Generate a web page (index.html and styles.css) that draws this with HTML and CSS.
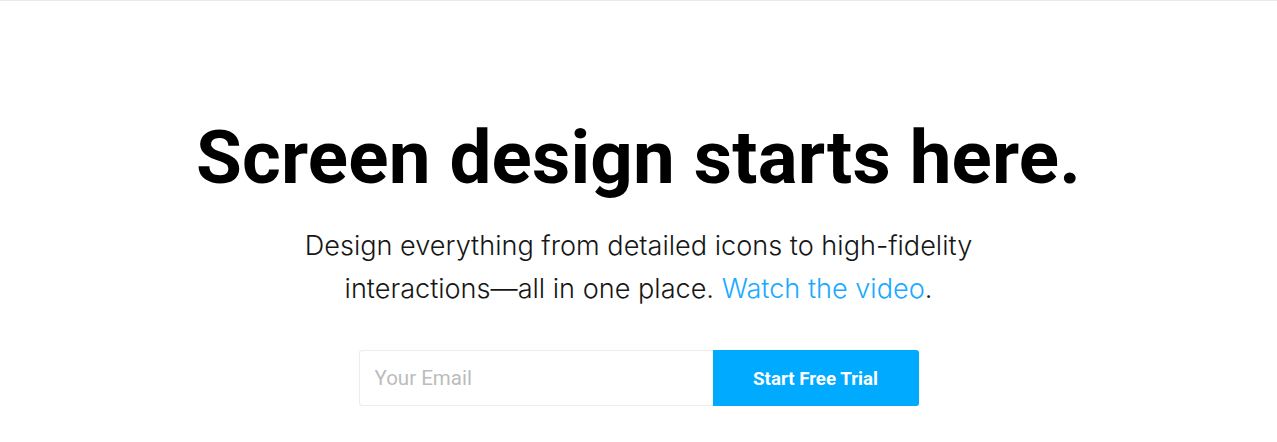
FILE: index.html
```html
<!DOCTYPE html>
<html>
<head>
<meta charset="utf-8">
<link rel="stylesheet" href="styles.css">
</head>
<body>
<div class="topline"></div>
<main class="hero">
  <h1 class="title">Screen design starts here.</h1>
  <p class="lead">Design everything from detailed icons to high-fidelity<br>interactions—all in one place. <a class="link" href="#">Watch the video</a>.</p>
  <form class="signup">
    <input class="email" type="email" placeholder="Your Email">
    <button class="cta" type="button">Start Free Trial</button>
  </form>
</main>
</body>
</html>
```
FILE: styles.css
```css
html, body {
  margin: 0;
  padding: 0;
  background: #fff;
}
body {
  font-family: Roboto, "Liberation Sans", sans-serif;
  color: #111;
}
.topline {
  height: 1px;
  background: #ebebeb;
}
.hero {
  display: flex;
  flex-direction: column;
  align-items: center;
  padding-top: 112px;
}
.title {
  margin: 0;
  font-size: 74.5px;
  font-weight: 700;
  line-height: 90px;
  letter-spacing: 0.2px;
  color: #000;
}
.lead {
  margin: 21px 0 0;
  font-family: Inter, Roboto, sans-serif;
  font-size: 27.1px;
  font-weight: 300;
  line-height: 43px;
  text-align: center;
  color: #161616;
}
.link {
  color: #1aaaff;
  text-decoration: none;
}
.signup {
  display: flex;
  margin-top: 40px;
}
.email {
  box-sizing: border-box;
  width: 354px;
  height: 56px;
  border: 1px solid #ececec;
  border-right: none;
  border-radius: 3px 0 0 3px;
  padding: 0 15px;
  font-family: Roboto, "Liberation Sans", sans-serif;
  font-size: 20.5px;
  color: #333;
  outline: none;
}
.email::placeholder {
  color: #bcbcbc;
}
.cta {
  width: 206px;
  height: 56px;
  padding-top: 2px;
  border: none;
  border-radius: 0 3px 3px 0;
  background: #00aaff;
  color: #fff;
  font-family: Roboto, "Liberation Sans", sans-serif;
  font-size: 18.7px;
  font-weight: 700;
  box-shadow: 0 1px 2px rgba(0,0,0,0.12);
  cursor: pointer;
}
```
